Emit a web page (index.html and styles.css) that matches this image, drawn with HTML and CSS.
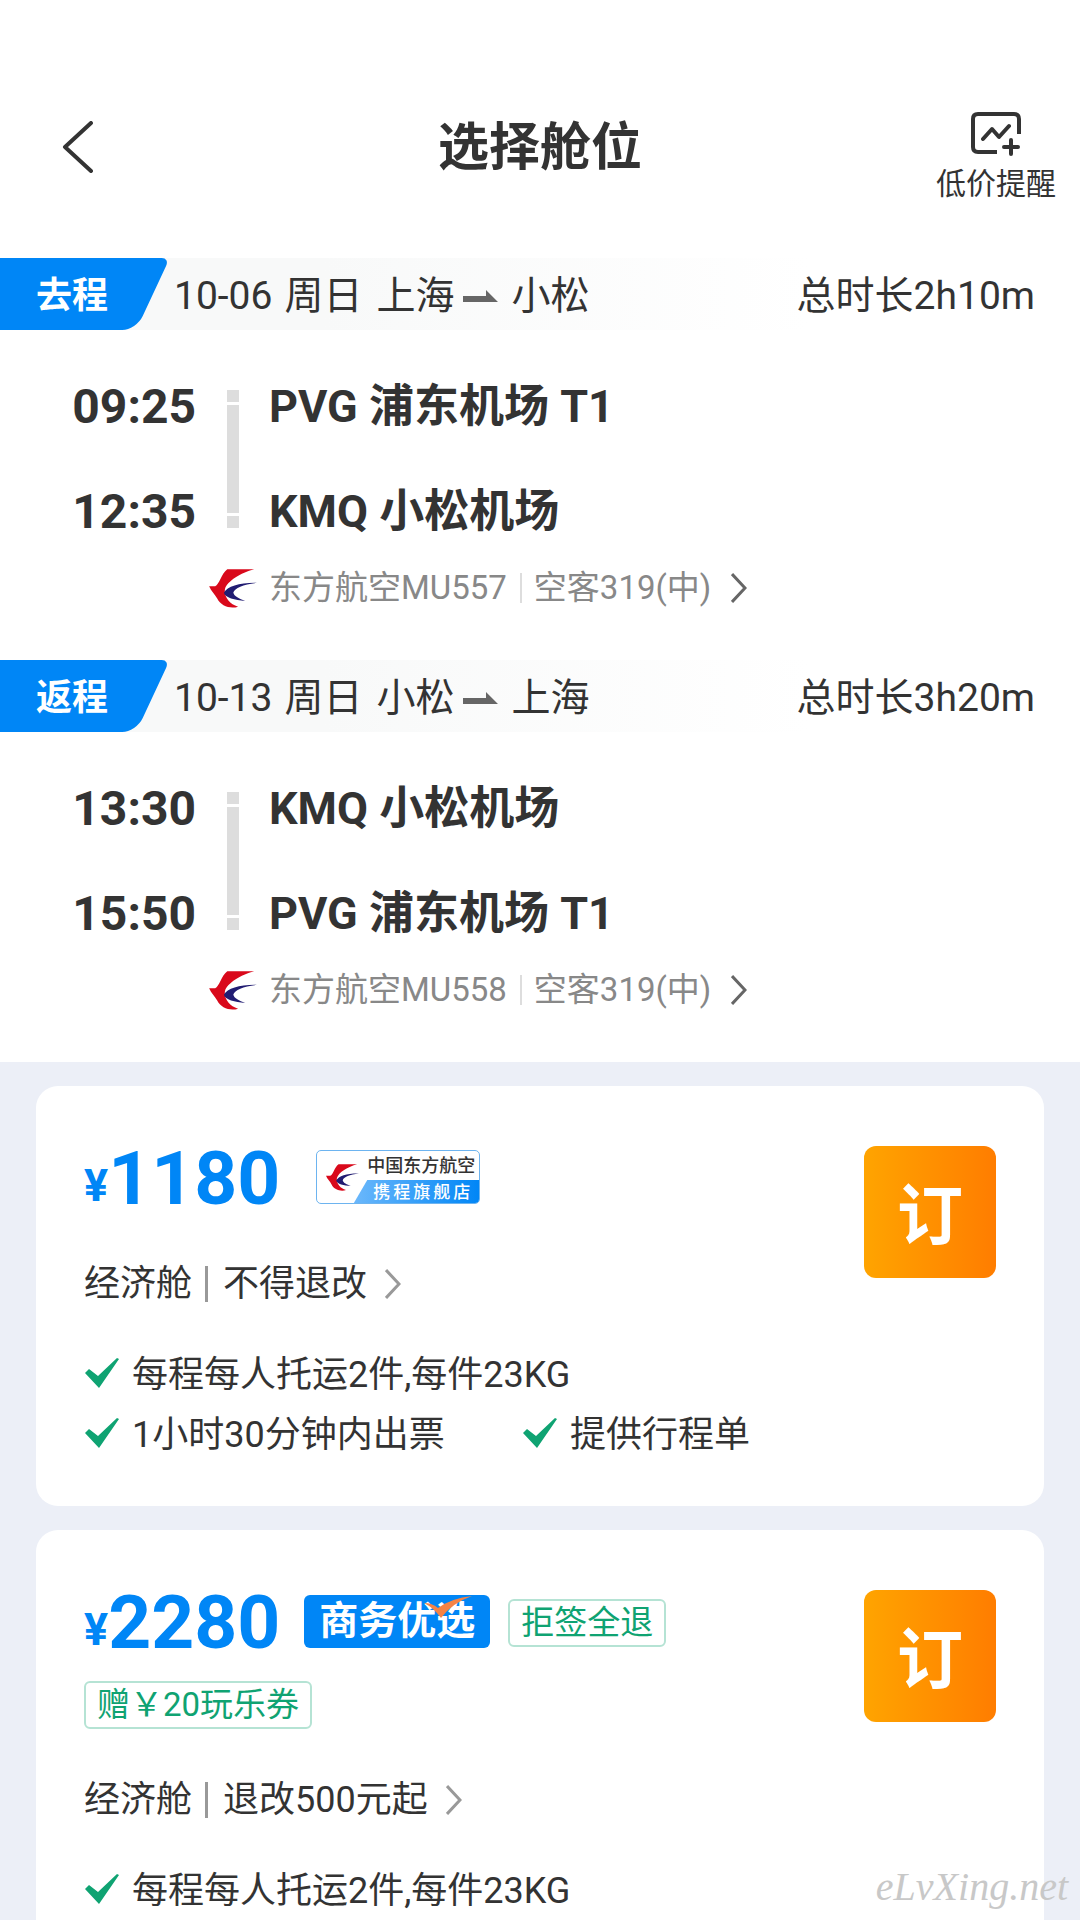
FILE: index.html
```html
<!DOCTYPE html>
<html lang="zh-CN">
<head>
    <meta charset="UTF-8">
    <meta name="viewport" content="width=device-width, initial-scale=1.0">
    <title>选择舱位</title>
    <link rel="stylesheet" href="styles.css">
</head>
<body>
    <!-- shared icons -->
    <svg class="sprite" aria-hidden="true">
        <symbol id="mu" viewBox="28 26 142 116">
            <path fill="#d9091b" d="M82 27H162C122 38 82 62 75 86 72 108 88 130 114 138 92 146 62 136 52 114 46 102 34 92 28 77H46C58 74 64 40 82 27Z"/>
            <path fill="#211c72" d="M170 67C130 72 104 82 100 96 102 108 118 114 135 121 105 119 75 112 72 97 82 77 120 66 170 67Z"/>
        </symbol>
        <symbol id="check" viewBox="0 0 34 30">
            <path fill="#0fa372" d="M0 15 4 11 13 18 32 0 34 1 14 30Z"/>
        </symbol>
        <symbol id="next" viewBox="0 0 16 30">
            <path fill="none" stroke="currentColor" stroke-width="3" d="M1 1 14 15 1 29"/>
        </symbol>
    </svg>

    <header class="header">
        <button class="back" aria-label="返回">
            <svg width="32" height="52" viewBox="0 0 32 52"><path d="M29 2 3 26 29 50"/></svg>
        </button>
        <h1>选择舱位</h1>
        <button class="remind">
            <svg width="50" height="44" viewBox="0 0 50 44">
                <path d="M26 40H7Q2 40 2 35V7Q2 2 7 2H43Q48 2 48 7V22"/>
                <path d="M12 27 21 17 28 25 38 14M40 28V42M33 35H47" stroke-linecap="round" stroke-linejoin="round"/>
            </svg>
            <span>低价提醒</span>
        </button>
    </header>

    <section class="trip">
        <div class="strip">
            <b class="tab">去程</b>
            <span class="date">10-06</span>
            <span class="week">周日</span>
            <span>上海</span>
            <svg class="arrow" width="35" height="12" viewBox="0 0 35 12"><path d="M0 6H23V0L35 12H0Z"/></svg>
            <span>小松</span>
            <span class="total">总时长2h10m</span>
        </div>
        <div class="route">
            <div class="times"><span>09:25</span><span>12:35</span></div>
            <div class="line"><i></i><i class="long"></i><i></i></div>
            <div class="places"><span>PVG 浦东机场 T1</span><span>KMQ 小松机场</span></div>
        </div>
        <a class="flight" href="#">
            <svg class="logo"><use href="#mu"/></svg>
            <span class="airline">东方航空MU557</span>
            <span class="plane">空客319(中)</span>
            <svg class="next"><use href="#next"/></svg>
        </a>
    </section>

    <section class="trip">
        <div class="strip">
            <b class="tab">返程</b>
            <span class="date">10-13</span>
            <span class="week">周日</span>
            <span>小松</span>
            <svg class="arrow" width="35" height="12" viewBox="0 0 35 12"><path d="M0 6H23V0L35 12H0Z"/></svg>
            <span>上海</span>
            <span class="total">总时长3h20m</span>
        </div>
        <div class="route">
            <div class="times"><span>13:30</span><span>15:50</span></div>
            <div class="line"><i></i><i class="long"></i><i></i></div>
            <div class="places"><span>KMQ 小松机场</span><span>PVG 浦东机场 T1</span></div>
        </div>
        <a class="flight" href="#">
            <svg class="logo"><use href="#mu"/></svg>
            <span class="airline">东方航空MU558</span>
            <span class="plane">空客319(中)</span>
            <svg class="next"><use href="#next"/></svg>
        </a>
    </section>

    <main class="list">
        <article class="card">
            <div class="info">
                <div class="top">
                    <div class="price"><small>¥</small>1180</div>
                    <div class="store">
                        <svg><use href="#mu"/></svg>
                        <div class="store-name">中国东方航空</div>
                        <div class="store-type">携程旗舰店</div>
                    </div>
                </div>
                <a class="rule" href="#">
                    <span class="cabin">经济舱</span><span>不得退改</span>
                    <svg class="next"><use href="#next"/></svg>
                </a>
                <ul class="perks">
                    <li class="wide"><svg><use href="#check"/></svg>每程每人托运2件,每件23KG</li>
                    <li><svg><use href="#check"/></svg>1小时30分钟内出票</li>
                    <li><svg><use href="#check"/></svg>提供行程单</li>
                </ul>
            </div>
            <button class="book">订</button>
        </article>

        <article class="card">
            <div class="info">
                <div class="top">
                    <div class="price"><small>¥</small>2280</div>
                    <div class="best">商务优选
                        <svg width="48" height="22" viewBox="0 0 48 22"><path d="M0 7Q8 7 14 12 28 2 48 0 28 7 17 22 10 12 0 7Z"/></svg>
                    </div>
                    <span class="tag">拒签全退</span>
                </div>
                <div class="tags"><span class="tag">赠￥20玩乐券</span></div>
                <a class="rule" href="#">
                    <span class="cabin">经济舱</span><span>退改500元起</span>
                    <svg class="next"><use href="#next"/></svg>
                </a>
                <ul class="perks">
                    <li class="wide"><svg><use href="#check"/></svg>每程每人托运2件,每件23KG</li>
                </ul>
            </div>
            <button class="book">订</button>
        </article>
    </main>

    <div class="watermark">eLvXing.net</div>
</body>
</html>
```
FILE: styles.css
```css
* {
    box-sizing: border-box;
}
body {
    margin: 0;
    min-height: 100vh;
    display: flex;
    flex-direction: column;
    position: relative;
    background-color: white;
    color: #333;
    font-family: Roboto, "Noto Sans CJK SC", sans-serif;
    font-size: 36px;
}
button {
    border: 0;
    padding: 0;
    background: none;
    color: inherit;
    font-family: inherit;
    cursor: pointer;
}
a {
    color: inherit;
    text-decoration: none;
}
svg {
    display: block;
    flex: none;
}
.sprite {
    position: absolute;
    width: 0;
    height: 0;
}
.next {
    width: 16px;
    height: 30px;
}

/* header */
.header {
    display: grid;
    grid-template-columns: 1fr auto 1fr;
    align-items: center;
    padding: 96px 24px 42px 62px;
    height: 258px;
}
.header path {
    fill: none;
    stroke: #333;
    stroke-width: 4px;
}
.back {
    justify-self: start;
    margin-bottom: 18px;
}
.back path {
    stroke-linecap: round;
    stroke-linejoin: round;
}
h1 {
    margin: 0 0 16px;
    padding-right: 38px;
    font-size: 51px;
    line-height: 60px;
}
.remind {
    justify-self: end;
    align-self: start;
    padding-top: 16px;
    display: flex;
    flex-direction: column;
    align-items: center;
    gap: 8px;
    font-size: 30px;
    line-height: 40px;
}

/* trips */
.trip {
    height: 402px;
}
.strip {
    display: flex;
    align-items: center;
    height: 72px;
    padding-right: 45px;
    background: linear-gradient(to right, #f8f9f9 30%, white 75%);
    font-size: 39px;
    line-height: 60px;
}
.strip span {
    padding-top: 4px;
}
.tab {
    position: relative;
    width: 174px;
    height: 72px;
    padding-left: 36px;
    color: white;
    font-size: 36px;
    line-height: 76px;
    z-index: 0;
}
.tab::before {
    content: "";
    position: absolute;
    inset: 0 21px 0 -40px;
    border-radius: 0 8px 14px 0;
    background-color: #0086f6;
    transform: skewX(-25deg);
    z-index: -1;
}
.week {
    margin: 0 14px 0 12px;
}
.arrow {
    margin: 4px 13px 0 9px;
    fill: #666;
}
.total {
    margin-left: auto;
}
.route {
    display: flex;
    padding: 47px 36px 0 70px;
    font-weight: bold;
}
.times, .places {
    display: flex;
    flex-direction: column;
    gap: 45px;
    line-height: 60px;
}
.times {
    width: 126px;
    text-align: right;
    font-size: 48px;
}
.places {
    font-size: 45px;
}
.line {
    display: flex;
    flex-direction: column;
    gap: 3px;
    width: 12px;
    margin: 13px 30px 0 31px;
}
.line i {
    height: 12px;
    background-color: #ddd;
}
.line .long {
    height: 108px;
}
.flight {
    display: flex;
    align-items: center;
    padding: 24px 0 0 209px;
    color: #888;
    font-size: 33px;
    line-height: 44px;
}
.logo {
    width: 48px;
    height: 39px;
    margin-right: 12px;
}
.plane {
    margin: 0 20px 0 13px;
    padding-left: 14px;
    background: linear-gradient(#ddd, #ddd) left center / 2px 30px no-repeat;
}
.flight .next {
    color: #666;
}

/* offers */
.list {
    flex: 1;
    display: flex;
    flex-direction: column;
    gap: 24px;
    padding: 24px 36px 0;
    background-color: #eceff7;
}
.card {
    display: flex;
    align-items: flex-start;
    justify-content: space-between;
    padding: 60px 48px 47px;
    border-radius: 22px;
    background-color: white;
}
.card:last-child {
    flex: 1;
    padding-bottom: 0;
    border-radius: 22px 22px 0 0;
}
.top {
    display: flex;
    align-items: center;
    height: 62px;
}
.price {
    padding-top: 10px;
    color: #0086f6;
    font-size: 75px;
    font-weight: bold;
    line-height: 62px;
}
.price small {
    font-size: 45px;
    vertical-align: 3px;
}
.store {
    position: relative;
    width: 164px;
    height: 54px;
    margin-left: 36px;
    border: 1px solid #6db4f0;
    border-radius: 5px;
    overflow: hidden;
    text-align: right;
}
.store svg {
    position: absolute;
    left: 9px;
    top: 13px;
    width: 33px;
    height: 27px;
}
.store-name {
    padding-right: 4px;
    font-size: 18px;
    font-weight: 500;
    line-height: 29px;
}
.store-type {
    margin-left: 36px;
    padding-right: 6px;
    background: linear-gradient(to right, #6cb8fb, #0086f6);
    clip-path: polygon(14px 0, 100% 0, 100% 100%, 0 100%);
    color: white;
    font-size: 17px;
    font-weight: 500;
    letter-spacing: 3px;
    line-height: 24px;
}
.best {
    position: relative;
    margin: 0 18px 0 24px;
    padding: 0 15px;
    border-radius: 6px;
    background-color: #0086f6;
    color: white;
    font-size: 39px;
    font-weight: bold;
    line-height: 53px;
}
.best svg {
    position: absolute;
    top: 1px;
    right: 18px;
    fill: #f58345;
}
.tag {
    padding: 0 11px;
    border: 2px solid #b5e3d4;
    border-radius: 6px;
    color: #0fa372;
    font-size: 33px;
    line-height: 44px;
}
.top .tag {
    margin-top: 3px;
}
.tags {
    display: flex;
    margin: 29px 0 -5px;
}
.rule {
    display: flex;
    align-items: center;
    margin-top: 52px;
    line-height: 48px;
}
.cabin {
    margin-right: 15px;
    padding-right: 16px;
    background: linear-gradient(#999, #999) right center / 3px 36px no-repeat;
}
.rule .next {
    margin-left: 18px;
    color: #999;
}
.perks {
    display: grid;
    grid-template-columns: 438px auto;
    row-gap: 12px;
    margin: 43px 0 0;
    padding: 0;
    list-style: none;
    line-height: 48px;
}
.perks li {
    display: flex;
    align-items: center;
}
.wide {
    grid-column: 1 / 3;
}
.perks svg {
    width: 34px;
    height: 30px;
    margin: 0 13px 5px 1px;
}
.book {
    width: 132px;
    height: 132px;
    padding-bottom: 4px;
    border-radius: 12px;
    background: linear-gradient(to right, #ffa400, #ff7d00);
    color: white;
    font-size: 66px;
    font-weight: bold;
}

.watermark {
    position: absolute;
    right: 12px;
    bottom: 10px;
    color: #c8c8c8;
    font-family: "Liberation Serif", serif;
    font-size: 40px;
    font-style: italic;
}
```
